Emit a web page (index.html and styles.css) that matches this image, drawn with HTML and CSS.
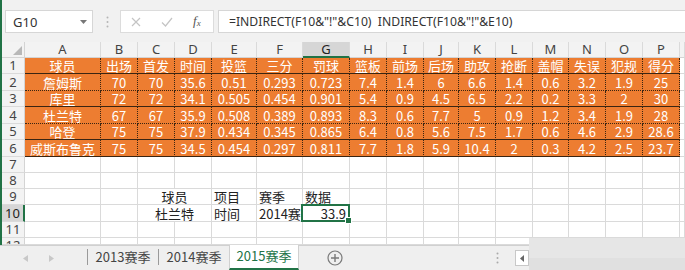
FILE: index.html
```html
<!DOCTYPE html>
<html>
<head>
<meta charset="utf-8">
<link rel="stylesheet" href="styles.css">
</head>
<body>
<div class="main">
  <div class="topbar">
    <div class="namebox"><span>G10</span><svg class="dd" width="7" height="4" viewBox="0 0 7 4"><path d="M0 0H7L3.5 4Z" fill="#777"/></svg></div>
    <svg class="vdots" width="3" height="12" viewBox="0 0 3 12"><circle cx="1.5" cy="1.5" r="1" fill="#b5b5b5"/><circle cx="1.5" cy="6" r="1" fill="#b5b5b5"/><circle cx="1.5" cy="10.5" r="1" fill="#b5b5b5"/></svg>
    <div class="fxbox">
      <svg width="10" height="10" viewBox="0 0 10 10"><path d="M1 1L9 9M9 1L1 9" stroke="#c4c4c4" stroke-width="1.2" fill="none"/></svg>
      <svg width="12" height="10" viewBox="0 0 12 10"><path d="M1 5.5L4.5 9L11 1" stroke="#c4c4c4" stroke-width="1.2" fill="none"/></svg>
      <span class="fx">f<sub>x</sub></span>
    </div>
    <div class="formula">=INDIRECT(F10&amp;"!"&amp;C10)&nbsp; INDIRECT(F10&amp;"!"&amp;E10)</div>
  </div>

  <div class="sheet">
    <div class="corner"><svg width="9" height="9" viewBox="0 0 9 9"><path d="M9 0V9H0Z" fill="#b8b8b8"/></svg></div>
    <div class="ch">A</div><div class="ch">B</div><div class="ch">C</div><div class="ch">D</div><div class="ch">E</div><div class="ch">F</div><div class="ch sel">G</div><div class="ch">H</div><div class="ch">I</div><div class="ch">J</div><div class="ch">K</div><div class="ch">L</div><div class="ch">M</div><div class="ch">N</div><div class="ch">O</div><div class="ch">P</div><div class="ch"></div>

    <div class="rh">1</div>
    <div class="d">球员</div><div class="d">出场</div><div class="d">首发</div><div class="d">时间</div><div class="d">投篮</div><div class="d">三分</div><div class="d">罚球</div><div class="d">篮板</div><div class="d">前场</div><div class="d">后场</div><div class="d">助攻</div><div class="d">抢断</div><div class="d">盖帽</div><div class="d">失误</div><div class="d">犯规</div><div class="d">得分</div><div class="e"></div>

    <div class="rh">2</div>
    <div class="d dt">詹姆斯</div><div class="d dt">70</div><div class="d dt">70</div><div class="d dt">35.6</div><div class="d dt">0.51</div><div class="d dt">0.293</div><div class="d dt">0.723</div><div class="d dt">7.4</div><div class="d dt">1.4</div><div class="d dt">6</div><div class="d dt">6.6</div><div class="d dt">1.4</div><div class="d dt">0.6</div><div class="d dt">3.2</div><div class="d dt">1.9</div><div class="d dt">25</div><div class="e"></div>

    <div class="rh">3</div>
    <div class="d">库里</div><div class="d">72</div><div class="d">72</div><div class="d">34.1</div><div class="d">0.505</div><div class="d">0.454</div><div class="d">0.901</div><div class="d">5.4</div><div class="d">0.9</div><div class="d">4.5</div><div class="d">6.5</div><div class="d">2.2</div><div class="d">0.2</div><div class="d">3.3</div><div class="d">2</div><div class="d">30</div><div class="e"></div>

    <div class="rh">4</div>
    <div class="d dt">杜兰特</div><div class="d dt">67</div><div class="d dt">67</div><div class="d dt">35.9</div><div class="d dt">0.508</div><div class="d dt">0.389</div><div class="d dt">0.893</div><div class="d dt">8.3</div><div class="d dt">0.6</div><div class="d dt">7.7</div><div class="d dt">5</div><div class="d dt">0.9</div><div class="d dt">1.2</div><div class="d dt">3.4</div><div class="d dt">1.9</div><div class="d dt">28</div><div class="e"></div>

    <div class="rh">5</div>
    <div class="d">哈登</div><div class="d">75</div><div class="d">75</div><div class="d">37.9</div><div class="d">0.434</div><div class="d">0.345</div><div class="d">0.865</div><div class="d">6.4</div><div class="d">0.8</div><div class="d">5.6</div><div class="d">7.5</div><div class="d">1.7</div><div class="d">0.6</div><div class="d">4.6</div><div class="d">2.9</div><div class="d">28.6</div><div class="e"></div>

    <div class="rh">6</div>
    <div class="d">威斯布鲁克</div><div class="d">75</div><div class="d">75</div><div class="d">34.5</div><div class="d">0.454</div><div class="d">0.297</div><div class="d">0.811</div><div class="d">7.7</div><div class="d">1.8</div><div class="d">5.9</div><div class="d">10.4</div><div class="d">2</div><div class="d">0.3</div><div class="d">4.2</div><div class="d">2.5</div><div class="d">23.7</div><div class="e"></div>

    <div class="rh">7</div>
    <div class="e"></div><div class="e"></div><div class="e"></div><div class="e"></div><div class="e"></div><div class="e"></div><div class="e"></div><div class="e"></div><div class="e"></div><div class="e"></div><div class="e"></div><div class="e"></div><div class="e"></div><div class="e"></div><div class="e"></div><div class="e"></div><div class="e"></div>

    <div class="rh">8</div>
    <div class="e"></div><div class="e"></div><div class="e"></div><div class="e"></div><div class="e"></div><div class="e"></div><div class="e"></div><div class="e"></div><div class="e"></div><div class="e"></div><div class="e"></div><div class="e"></div><div class="e"></div><div class="e"></div><div class="e"></div><div class="e"></div><div class="e"></div>

    <div class="rh">9</div>
    <div class="e"></div><div class="e"></div><div class="e t span2">球员</div><div class="e t">项目</div><div class="e t">赛季</div><div class="e t">数据</div><div class="e"></div><div class="e"></div><div class="e"></div><div class="e"></div><div class="e"></div><div class="e"></div><div class="e"></div><div class="e"></div><div class="e"></div><div class="e"></div>

    <div class="rh rsel">10</div>
    <div class="e"></div><div class="e"></div><div class="e t span2">杜兰特</div><div class="e t">时间</div><div class="e t">2014赛季</div><div class="e num active">33.9</div><div class="e"></div><div class="e"></div><div class="e"></div><div class="e"></div><div class="e"></div><div class="e"></div><div class="e"></div><div class="e"></div><div class="e"></div><div class="e"></div>

    <div class="rh">11</div>
    <div class="e"></div><div class="e"></div><div class="e"></div><div class="e"></div><div class="e"></div><div class="e"></div><div class="e"></div><div class="e"></div><div class="e"></div><div class="e"></div><div class="e"></div><div class="e"></div><div class="e"></div><div class="e"></div><div class="e"></div><div class="e"></div><div class="e"></div>

    <div class="rh top">12</div>
    <div class="e"></div><div class="e"></div><div class="e"></div><div class="e"></div><div class="e"></div><div class="e"></div><div class="e"></div><div class="e"></div><div class="e"></div><div class="e"></div><div class="e"></div><div class="e"></div><div class="e"></div><div class="e"></div><div class="e"></div><div class="e"></div><div class="e"></div>
  </div>
</div>

<div class="tabbar">
  <div class="nav">
    <svg width="5" height="7" viewBox="0 0 5 7"><path d="M5 0V7L0 3.5Z" fill="#c8c8c8"/></svg>
    <svg width="5" height="7" viewBox="0 0 5 7"><path d="M0 0V7L5 3.5Z" fill="#c8c8c8"/></svg>
  </div>
  <div class="sep"></div>
  <div class="tab">2013赛季</div>
  <div class="sep"></div>
  <div class="tab">2014赛季</div>
  <div class="tab on">2015赛季</div>
  <svg class="plus" width="16" height="16" viewBox="0 0 16 16"><circle cx="8" cy="8" r="7" fill="none" stroke="#7a7a7a" stroke-width="1.2"/><path d="M8 4V12M4 8H12" stroke="#7a7a7a" stroke-width="1.4"/></svg>
  <div class="grow"></div>
  <svg class="vdots2" width="3" height="12" viewBox="0 0 3 12"><circle cx="1.5" cy="1.5" r="1" fill="#aaa"/><circle cx="1.5" cy="6" r="1" fill="#aaa"/><circle cx="1.5" cy="10.5" r="1" fill="#aaa"/></svg>
  <div class="sbtn"><svg width="4" height="7" viewBox="0 0 4 7"><path d="M4 0V7L0 3.5Z" fill="#666"/></svg></div>
</div>
<div class="hscroll"><div class="hs-low"></div></div>
</body>
</html>
```
FILE: styles.css
```css
* { box-sizing: border-box; margin: 0; padding: 0; }
body {
  width: 685px;
  height: 270px;
  overflow: hidden;
  position: relative;
  background: #f1f1f1;
  font-family: "Noto Sans CJK SC", "Noto Sans", sans-serif;
  color: #222;
}
.main {
  border-left: 2px solid #217346;
  height: 245px;
  overflow: hidden;
}
.topbar {
  height: 42px;
  display: flex;
  align-items: flex-start;
  padding-top: 10px;
}
.namebox {
  margin-left: 3px;
  width: 88px;
  height: 23px;
  background: #fff;
  border: 1px solid #d6d6d6;
  display: flex;
  align-items: center;
  justify-content: space-between;
  padding: 0 5px 0 7px;
  font: 13px "Noto Sans", sans-serif;
  color: #333;
}
.vdots { margin: 6px 0 0 13px; }
.fxbox {
  margin-left: 11px;
  width: 94px;
  height: 23px;
  background: #fff;
  border: 1px solid #dcdcdc;
  display: flex;
  align-items: center;
  padding-left: 10px;
  gap: 20px;
}
.fx {
  font: italic 13px "Liberation Serif", serif;
  color: #555;
  line-height: 14px;
}
.fx sub { font-size: 9px; vertical-align: -1px; }
.formula {
  margin-left: 4px;
  flex: 1;
  height: 23px;
  background: #fff;
  border: 1px solid #d6d6d6;
  border-right: none;
  padding-left: 10px;
  font: 12.2px "Noto Sans", sans-serif;
  line-height: 21px;
  color: #333;
  white-space: nowrap;
}
.sheet {
  display: grid;
  grid-template-columns: 23px 76px 37px 37px 37px 45px 46px 47px 37px 37px 35px 37px 37px 36px 37px 37px 37px 5px;
  grid-template-rows: 16px 16px 17px 16px 17px 16px 17px 16px 16px 16px 17px 16px 7px;
  background: #fff;
}
.sheet > div {
  display: flex;
  align-items: center;
  justify-content: center;
  overflow: hidden;
  white-space: nowrap;
  font-size: 13px;
  line-height: 15px;
}
.corner {
  background: #f3f3f3;
  border-right: 1px solid #d4d4d4;
  border-bottom: 1px solid #d4d4d4;
  align-items: flex-end !important;
  justify-content: flex-end !important;
  padding: 0 2px 2px 0;
}
.ch {
  background: #f3f3f3;
  border-right: 1px solid #dadada;
  border-bottom: 1px solid #d4d4d4;
  color: #444;
  font-family: "Noto Sans", sans-serif;
}
.ch.sel {
  background: #d6d6d6;
  border-bottom: 2px solid #217346;
  color: #222;
}
.rh {
  background: #f3f3f3;
  border-right: 1px solid #d4d4d4;
  border-bottom: 1px solid #dadada;
  color: #444;
  font-family: "Noto Sans", sans-serif;
}
.rh.rsel {
  background: #d6d6d6;
  border-right: 2px solid #217346;
  color: #222;
}
.sheet > .rh.top { align-items: flex-start; }
.d {
  background: #ed7d31;
  color: #fff;
  border-right: 1px dotted #3a2512;
  border-bottom: 1px solid #3a2512;
}
.d.dt { border-bottom: 1px dotted #3a2512; }
.e {
  border-right: 1px solid #dadada;
  border-bottom: 1px solid #dadada;
}
.span2 { grid-column: span 2; }
.t { color: #222; }
.sheet > .e.t:not(.span2) { justify-content: flex-start; padding-left: 2px; }
.sheet > .e.num {
  justify-content: flex-end;
  padding-right: 3px;
  position: relative;
  overflow: visible;
  color: #222;
}
.active::after {
  content: "";
  position: absolute;
  left: -2px; top: -1px; right: -1px; bottom: -1px;
  border: 2px solid #217346;
}
.active::before {
  content: "";
  position: absolute;
  right: -3px; bottom: -3px;
  width: 5px; height: 5px;
  background: #217346;
  border: 1px solid #fff;
  z-index: 2;
}
.tabbar {
  height: 25px;
  display: flex;
  align-items: stretch;
  background: #efefef;
  border-top: 1px solid #d0d0d0;
  font-size: 13px;
  line-height: 16px;
  color: #444;
}
.nav {
  width: 87px;
  display: flex;
  align-items: center;
  gap: 21px;
  padding-left: 23px;
}
.sep {
  width: 1px;
  background: #9a9a9a;
  margin: 3px 0 5px;
}
.tab {
  width: 70px;
  display: flex;
  align-items: center;
  justify-content: center;
  padding-bottom: 2px;
}
.tab.on {
  background: #fff;
  color: #217346;
  border-bottom: 2px solid #217346;
  border-left: 1px solid #d0d0d0;
  border-right: 1px solid #d0d0d0;
  margin-top: -1px;
}
.plus { align-self: center; margin-left: 28px; }
.grow { flex: 1; }
.vdots2 { align-self: center; margin-right: 16px; }
.sbtn {
  width: 14px;
  height: 16px;
  align-self: center;
  background: #fff;
  border: 1px solid #c8c8c8;
  display: flex;
  align-items: center;
  justify-content: center;
  margin-right: 156px;
}
.hscroll {
  position: absolute;
  left: 529px;
  top: 238px;
  width: 156px;
  height: 32px;
  background: #e6e6e6;
}
.hs-low {
  margin-top: 20px;
  height: 12px;
  background: #e0e0e0;
}
```
